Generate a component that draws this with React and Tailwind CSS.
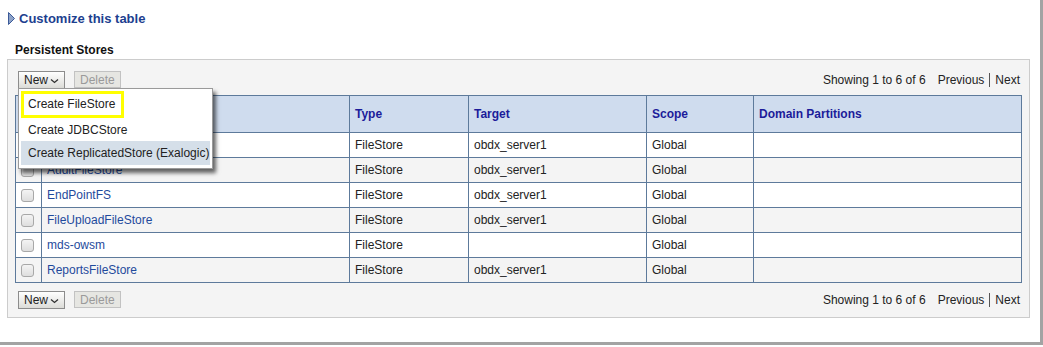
const rows = [
  { name: 'AdminFileStore', type: 'FileStore', target: 'obdx_server1', scope: 'Global' },
  { name: 'AuditFileStore', type: 'FileStore', target: 'obdx_server1', scope: 'Global' },
  { name: 'EndPointFS', type: 'FileStore', target: 'obdx_server1', scope: 'Global' },
  { name: 'FileUploadFileStore', type: 'FileStore', target: 'obdx_server1', scope: 'Global' },
  { name: 'mds-owsm', type: 'FileStore', target: '', scope: 'Global' },
  { name: 'ReportsFileStore', type: 'FileStore', target: 'obdx_server1', scope: 'Global' },
];

function Toolbar() {
  return (
    <div className="flex items-center justify-between h-[17px]">
      <div className="flex items-center gap-[9px] ml-[3px]">
        <button className="h-[18px] px-[5px] flex items-center gap-[2px] border border-[#8c8c8c] bg-gradient-to-b from-white to-[#dcdcd8] text-[12px] text-[#222] leading-none">
          New
          <svg width="9" height="6" viewBox="0 0 9 6" className="mt-[2px]">
            <path d="M1 1.5 L4.5 4.5 L8 1.5" fill="none" stroke="#333" strokeWidth="1.3" />
          </svg>
        </button>
        <button className="h-[17px] px-[5px] border border-[#c2c2c2] bg-[#e6e6e2] text-[12px] text-[#9a9a9a] leading-none">
          Delete
        </button>
      </div>
      <div className="text-[12px] text-[#222] mr-[2px] flex items-center">
        <span>Showing 1 to 6 of 6</span>
        <span className="ml-[12px]">Previous</span>
        <span className="mx-[5px] h-[14px] border-l border-[#555]" />
        <span>Next</span>
      </div>
    </div>
  );
}

function Checkbox() {
  return (
    <div className="w-[13px] h-[13px] rounded-[3px] border border-[#a8a8a8] bg-gradient-to-b from-[#f4f4f4] to-[#dedede]" />
  );
}

export default function App() {
  const th = 'border border-[#5d7a9b] text-left px-[5px] font-bold text-[#1c1c9a]';
  const td = 'border border-[#5d7a9b] px-[5px] text-[#222]';
  return (
    <div className="w-[1043px] h-[347px] bg-white" style={{ fontFamily: '"Liberation Sans", Arial, sans-serif' }}>
      <div className="w-[1043px] h-[345px] border-r-[3px] border-b-[3px] border-[#a3a3a3] bg-white">
        <div className="flex items-center pt-[12px] pl-[8px] h-[25px]">
          <svg width="7" height="13" viewBox="0 0 7 13">
            <path d="M0.5 0.5 L6.5 6.5 L0.5 12.5 Z" fill="#8ea3c8" stroke="#3b5a99" strokeWidth="1" />
          </svg>
          <span className="ml-[4px] text-[13px] font-bold text-[#1d3f8f]">Customize this table</span>
        </div>
        <div className="pl-[15px] mt-[18px] text-[12px] font-bold text-[#111] leading-[14px]">Persistent Stores</div>
        <div className="relative ml-[7px] mt-[2px] w-[1023px] h-[259px] border border-[#cccccc] bg-[#f4f4f4] px-[7px] pt-[11px]">
          <Toolbar />
          <table className="mt-[7px] w-[1007px] border-collapse text-[12px] table-fixed">
            <colgroup>
              <col className="w-[26px]" />
              <col className="w-[308px]" />
              <col className="w-[119px]" />
              <col className="w-[178px]" />
              <col className="w-[107px]" />
              <col />
            </colgroup>
            <thead>
              <tr className="h-[37px] bg-[#cfdcee]">
                <th className="border border-[#5d7a9b]" />
                <th className={th}></th>
                <th className={th}>Type</th>
                <th className={th}>Target</th>
                <th className={th}>Scope</th>
                <th className={th}>Domain Partitions</th>
              </tr>
            </thead>
            <tbody>
              {rows.map((r, i) => (
                <tr key={r.name} className={`h-[25px] ${i % 2 ? 'bg-[#f4f4f4]' : 'bg-white'}`}>
                  <td className="border border-[#5d7a9b] pl-[5px]"><Checkbox /></td>
                  <td className="border border-[#5d7a9b] px-[5px] text-[#1f4a9c]">{r.name}</td>
                  <td className={td}>{r.type}</td>
                  <td className={td}>{r.target}</td>
                  <td className={td}>{r.scope}</td>
                  <td className={td}></td>
                </tr>
              ))}
            </tbody>
          </table>
          <div className="mt-[8px]">
            <Toolbar />
          </div>

          <div className="absolute left-[10px] top-[28px] w-[195px] h-[81px] bg-white border border-[#9a9a9a] shadow-[3px_4px_4px_rgba(0,0,0,0.6)] p-[2px] text-[12px] text-[#222]">
            <div className="w-[103px] h-[27px] border-[3px] border-[#ffff00] flex items-center pl-[4px] pb-[2px]">Create FileStore</div>
            <div className="h-[23px] flex items-center pl-[7px]">Create JDBCStore</div>
            <div className="h-[24px] flex items-center pl-[7px] bg-[#d5dfe9]">Create ReplicatedStore (Exalogic)</div>
          </div>
        </div>
      </div>
    </div>
  );
}
